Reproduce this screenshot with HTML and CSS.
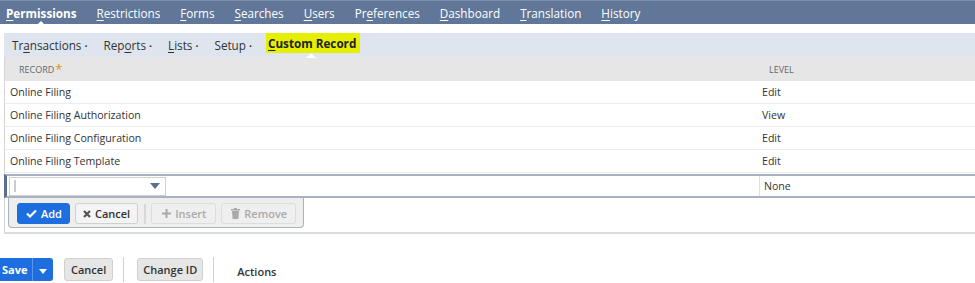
FILE: index.html
```html
<!DOCTYPE html>
<html lang="en">
  <head>
    <meta charset="UTF-8" />
    <title>Role Permissions</title>
    <link rel="stylesheet" href="styles.css">
  </head>
  <body>
    <nav class="topnav">
      <a class="active"><u>P</u>ermissions</a>
      <a><u>R</u>estrictions</a>
      <a><u>F</u>orms</a>
      <a><u>S</u>earches</a>
      <a><u>U</u>sers</a>
      <a>Pr<u>e</u>ferences</a>
      <a><u>D</u>ashboard</a>
      <a><u>T</u>ranslation</a>
      <a><u>H</u>istory</a>
    </nav>

    <div class="subnav">
      <a>Tr<u>a</u>nsactions <span class="dot">•</span></a>
      <a>Rep<u>o</u>rts <span class="dot">•</span></a>
      <a><u>L</u>ists <span class="dot">•</span></a>
      <a>Setup <span class="dot">•</span></a>
      <a class="current"><u>C</u>ustom Record</a>
    </div>

    <div class="machine">
      <div class="row head">
        <div class="cell rec">RECORD<span class="req">*</span></div>
        <div class="cell lvl">LEVEL</div>
      </div>
      <div class="row">
        <div class="cell">Online Filing</div>
        <div class="cell lvl-val">Edit</div>
      </div>
      <div class="row">
        <div class="cell">Online Filing Authorization</div>
        <div class="cell lvl-val">View</div>
      </div>
      <div class="row">
        <div class="cell">Online Filing Configuration</div>
        <div class="cell lvl-val">Edit</div>
      </div>
      <div class="row">
        <div class="cell">Online Filing Template</div>
        <div class="cell lvl-val">Edit</div>
      </div>
      <div class="row edit">
        <div class="cell">
          <div class="dropdown">
            <span class="caret-bar"></span>
            <svg class="arrow" width="10" height="6" viewBox="0 0 10 6"><path d="M0 0h10L5 6z" fill="#5d6f8c"/></svg>
          </div>
        </div>
        <div class="cell lvl-val sep">None</div>
      </div>
      <div class="actions-bar">
        <div class="tools">
          <button class="btn primary">
            <svg width="11" height="9" viewBox="0 0 11 9"><path d="M1 4.5l3 3L10 1.5" fill="none" stroke="#fff" stroke-width="2.2"/></svg>
            Add
          </button>
          <button class="btn">
            <svg width="8" height="8" viewBox="0 0 8 8"><path d="M1 1l6 6M7 1L1 7" stroke="#555" stroke-width="2.2"/></svg>
            Cancel
          </button>
          <span class="divider"></span>
          <button class="btn disabled">
            <svg width="9" height="9" viewBox="0 0 9 9"><path d="M4.5 0v9M0 4.5h9" stroke="#aaa" stroke-width="2"/></svg>
            Insert
          </button>
          <button class="btn disabled">
            <svg width="9" height="11" viewBox="0 0 9 11"><path d="M0 1h9v1.5H0zM3 0h3v1H3zM1 3h7l-.6 8H1.6z" fill="#aaa"/></svg>
            Remove
          </button>
        </div>
      </div>
    </div>

    <div class="footer">
      <div class="split">
        <button class="save">Save</button>
        <button class="save-menu">
          <svg width="8" height="5" viewBox="0 0 8 5"><path d="M0 0h8L4 5z" fill="#fff"/></svg>
        </button>
      </div>
      <button class="grey cancel">Cancel</button>
      <span class="vline"></span>
      <button class="grey change">Change ID</button>
      <span class="vline"></span>
      <span class="actions">Actions</span>
    </div>
  </body>
</html>
```

FILE: styles.css
```css
body {
  margin: 0;
  font-family: "Open Sans", sans-serif;
  color: #333;
  background: white;
  overflow: hidden;
}

u {
  text-decoration-thickness: 1px;
  text-underline-offset: 2px;
}

/* top tabs */
.topnav {
  display: flex;
  gap: 20px;
  height: 23px;
  padding-left: 6px;
  background: #607799;
  border-top: 1px solid #7a8fae;
  align-items: center;
}

.topnav a {
  color: white;
  font-size: 11.7px;
  position: relative;
}

.topnav a.active {
  font-weight: bold;
}

.topnav a.active::after {
  content: "";
  position: absolute;
  left: 30px;
  bottom: -5px;
  border: 5px solid transparent;
  border-bottom-color: white;
  border-top: 0;
}

/* sub tabs */
.subnav {
  display: flex;
  align-items: center;
  gap: 16px;
  margin: 9px 0 0 4px;
  padding-left: 8px;
  height: 24px;
  background: #dfe5ef;
}

.subnav a {
  font-size: 11.7px;
  color: #333;
}

.subnav .dot {
  font-size: 8px;
  vertical-align: 1px;
}

.subnav a.current {
  font-weight: bold;
  color: #222;
  background: #e6ef00;
  padding: 3px 4px 3px 2px;
  margin-left: -2px;
  position: relative;
  align-self: flex-start;
  line-height: 14px;
}

.subnav a.current::after {
  content: "";
  position: absolute;
  left: 40px;
  bottom: -5px;
  border: 5px solid transparent;
  border-bottom-color: white;
  border-top: 0;
}

/* list machine */
.machine {
  margin-left: 4px;
  border-left: 1px solid #d4d4d4;
  border-bottom: 2px solid #dcdcdc;
  padding-bottom: 4px;
}

.row {
  display: grid;
  grid-template-columns: 752px 1fr;
  height: 22px;
  align-items: center;
  border-bottom: 1px solid #ececec;
  font-size: 10.6px;
  color: #333;
}

.row.head {
  height: 24px;
  background: #e6e6e6;
  border-bottom: none;
  font-size: 9px;
  color: #666;
}

.cell {
  padding-left: 5px;
}

.cell.rec {
  padding-left: 14px;
}

.req {
  color: #d9922a;
  font-size: 13px;
  margin-left: 1px;
  vertical-align: -1px;
}

.cell.lvl {
  padding-left: 12px;
}

.row.edit {
  height: 20px;
  border-top: 2px solid #a7b1c1;
  border-bottom: 2px solid #a7b1c1;
  border-left: 3px solid #5b6e8f;
  margin-left: -1px;
  margin-top: 1px;
}

.row.edit .cell:first-child {
  padding-left: 2px;
}

.row.edit .sep {
  border-left: 1px solid #e0e0e0;
  height: 100%;
  display: flex;
  align-items: center;
  padding-left: 4px;
}

.dropdown {
  height: 19px;
  border: 1px solid #d0d0d0;
  background: white;
  display: flex;
  align-items: center;
  justify-content: space-between;
  padding: 0 5px 0 4px;
  box-sizing: border-box;
  width: 157px;
}

.caret-bar {
  width: 2px;
  height: 12px;
  background: #ccc;
}

.actions-bar {
  padding-left: 3px;
}

.tools {
  display: inline-flex;
  align-items: center;
  gap: 5px;
  background: #eeeeee;
  border: 1px solid #a7b1c1;
  border-top: none;
  border-radius: 0 0 4px 4px;
  padding: 5px 7px 3px 8px;
}

.btn {
  font-family: "Open Sans", sans-serif;
  font-size: 11px;
  font-weight: 600;
  height: 21px;
  padding: 0 7px;
  border: 1px solid #d0d0d0;
  border-radius: 3px;
  background: #f4f4f4;
  color: #333;
  display: inline-flex;
  align-items: center;
  gap: 4px;
}

.btn.primary {
  background: #1d6fe0;
  border-color: #1d6fe0;
  color: white;
  padding: 0 7px 0 8px;
}

.btn.disabled {
  color: #aaa;
  border-color: #ddd;
  background: #efefef;
  padding: 0 9px 0 10px;
}

.btn.disabled + .btn.disabled {
  padding: 0 8px 0 9px;
}

.divider {
  width: 2px;
  height: 20px;
  background: #d8d8d8;
  margin: 0 0 0 1px;
}

/* bottom buttons */
.footer {
  display: flex;
  align-items: center;
  margin-top: 23px;
}

.split {
  display: flex;
  height: 23px;
}

.save,
.save-menu {
  background: #1d6fe0;
  border: none;
  color: white;
  font-family: "Open Sans", sans-serif;
  font-weight: bold;
  font-size: 11px;
  border-radius: 0 3px 3px 0;
}

.save {
  border-radius: 0;
  padding: 0 0 0 2px;
  width: 33px;
  text-align: left;
  border-right: 1px solid #5b96ea;
}

.save-menu {
  width: 20px;
  padding: 0;
}

.grey {
  font-family: "Open Sans", sans-serif;
  font-size: 11px;
  font-weight: 600;
  height: 23px;
  padding: 0 6px;
  background: #e6e6e6;
  border: 1px solid #d0d0d0;
  border-radius: 3px;
  color: #333;
}

.grey.cancel {
  margin-left: 11px;
}

.grey.change {
  margin-left: 13px;
  padding: 0 5px;
}

.vline {
  width: 1px;
  height: 25px;
  background: #d0d0d0;
  margin-left: 10px;
}

.actions {
  font-size: 11px;
  font-weight: 600;
  color: #333;
  margin-left: 23px;
  margin-top: 4px;
}
```
